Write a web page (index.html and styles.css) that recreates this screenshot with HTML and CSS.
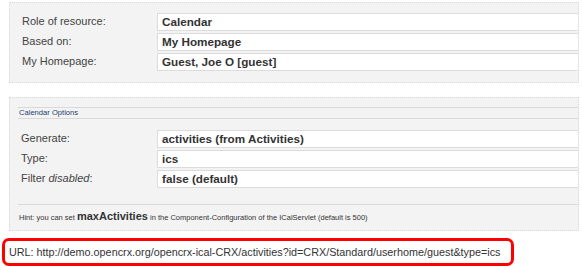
FILE: index.html
```html
<!DOCTYPE html>
<html>
<head>
<meta charset="utf-8">
<link rel="stylesheet" href="styles.css">
</head>
<body>
<div class="panel panel-top">
  <div class="row"><div class="label">Role of resource:</div><div class="field">Calendar</div></div>
  <div class="row"><div class="label">Based on:</div><div class="field">My Homepage</div></div>
  <div class="row"><div class="label">My Homepage:</div><div class="field">Guest, Joe O [guest]</div></div>
</div>
<div class="panel panel-options">
  <div class="options-inner">
    <div class="section-title">Calendar Options</div>
    <div class="rows">
      <div class="row"><div class="label">Generate:</div><div class="field">activities (from Activities)</div></div>
      <div class="row"><div class="label">Type:</div><div class="field">ics</div></div>
      <div class="row"><div class="label">Filter <em>disabled</em>:</div><div class="field">false (default)</div></div>
    </div>
    <div class="hint">Hint: you can set <b>maxActivities</b> in the Component-Configuration of the ICalServlet (default is 500)</div>
  </div>
</div>
<div class="url-box">URL: http://demo.opencrx.org/opencrx-ical-CRX/activities?id=CRX/Standard/userhome/guest&amp;type=ics</div>
</body>
</html>
```
FILE: styles.css
```css
html, body {
  margin: 0;
  padding: 0;
  background: #ffffff;
  font-family: "Liberation Sans", Arial, sans-serif;
  color: #333333;
}
.panel {
  margin-left: 9px;
  width: 568px;
  background: #f3f3f3;
  border: 1px dotted #d9d9d9;
}
.panel-top {
  margin-top: 2px;
  padding: 10px 0 11px 0;
}
.row {
  display: grid;
  grid-template-columns: 147px 1fr;
  height: 18px;
  margin-bottom: 2px;
}
.row:last-child {
  margin-bottom: 0;
}
.label {
  padding-left: 12px;
  font-size: 11px;
  line-height: 16px;
  color: #444444;
}
.field {
  background: #ffffff;
  border: 1px solid #dcdcdc;
  border-right: none;
  padding-left: 4px;
  font-size: 11.7px;
  font-weight: bold;
  line-height: 16px;
  color: #333333;
  white-space: nowrap;
  overflow: hidden;
}
.panel-options {
  margin-top: 14px;
  padding: 9px 0 0 0;
}
.options-inner {
  padding-left: 8px;
}
.options-inner .row {
  grid-template-columns: 139px 1fr;
}
.options-inner .label {
  padding-left: 3px;
}
.section-title {
  border-top: 1px solid #d9d9d9;
  border-bottom: 1px solid #d9d9d9;
  height: 10px;
  line-height: 10px;
  font-size: 7.6px;
  color: #1f3c6e;
  padding-left: 1px;
}
.rows {
  margin-top: 11px;
}
.hint {
  margin-top: 16px;
  border-top: 1px solid #d9d9d9;
  padding: 3px 0 4px 1px;
  line-height: 16px;
  font-size: 7.5px;
  color: #333333;
  white-space: nowrap;
}
.hint b {
  font-size: 11px;
  color: #333333;
}
.url-box {
  margin: 7px 0 0 2px;
  width: 502px;
  height: 22px;
  border: 3px solid #ff0000;
  border-radius: 7px;
  padding-left: 4px;
  line-height: 22px;
  font-size: 10.8px;
  color: #333333;
  white-space: nowrap;
}
```
